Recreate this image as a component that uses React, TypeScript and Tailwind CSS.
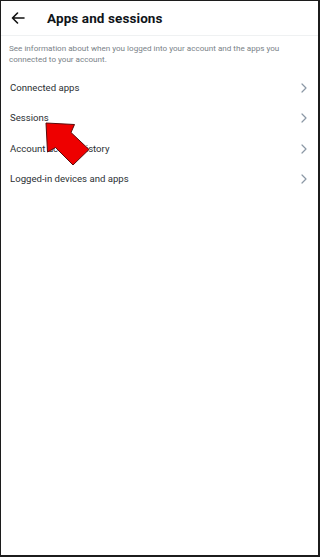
import React from "react";

const Chevron = () => (
  <svg width="6" height="10" viewBox="0 0 6 10" fill="none">
    <path d="M1 1l4 4-4 4" stroke="#8b98a5" strokeWidth="1.2" strokeLinecap="round" strokeLinejoin="round" />
  </svg>
);

const rows = ["Connected apps", "Sessions", "Account access history", "Logged-in devices and apps"];

export default function App() {
  return (
    <div
      className="relative w-[320px] h-[557px] bg-white border-l border-t border-r-2 border-b-2 border-[#1c1c1c] overflow-hidden"
      style={{ fontFamily: "Roboto, 'Liberation Sans', Arial, sans-serif" }}
    >
      <div className="flex items-center h-[35px] border-b border-[#eff1f2]">
        <div className="w-[46px] flex justify-start pl-[10px]">
          <svg width="14" height="12" viewBox="0 0 14 12" fill="none">
            <path d="M13 6H1.5M6.5 1L1.5 6l5 5" stroke="#111" strokeWidth="1.6" strokeLinecap="round" strokeLinejoin="round" />
          </svg>
        </div>
        <div className="text-[13.5px] font-bold text-[#0f1419] tracking-[0.1px]">Apps and sessions</div>
      </div>
      <div className="pl-[8px] pr-[30px] pt-[7px] pb-[8px] text-[8.1px] leading-[11px] text-[#7a8288]">
        See information about when you logged into your account and the apps you connected to your account.
      </div>
      <div className="flex flex-col">
        {rows.map((r) => (
          <div key={r} className="flex items-center justify-between h-[30.3px] pl-[9px] pr-[11px]">
            <span className="text-[9.6px] text-[#2b3034]">{r}</span>
            <Chevron />
          </div>
        ))}
      </div>
      <svg className="absolute left-0 top-0" width="320" height="557" viewBox="0 0 320 557">
        <polygon
          points="45,122 73.5,123.5 70,131.5 88,148.5 72,164 54.5,146.5 46.5,151"
          fill="#ee0000"
          stroke="#5a0a0a"
          strokeWidth="1"
          strokeLinejoin="miter"
        />
      </svg>
    </div>
  );
}
